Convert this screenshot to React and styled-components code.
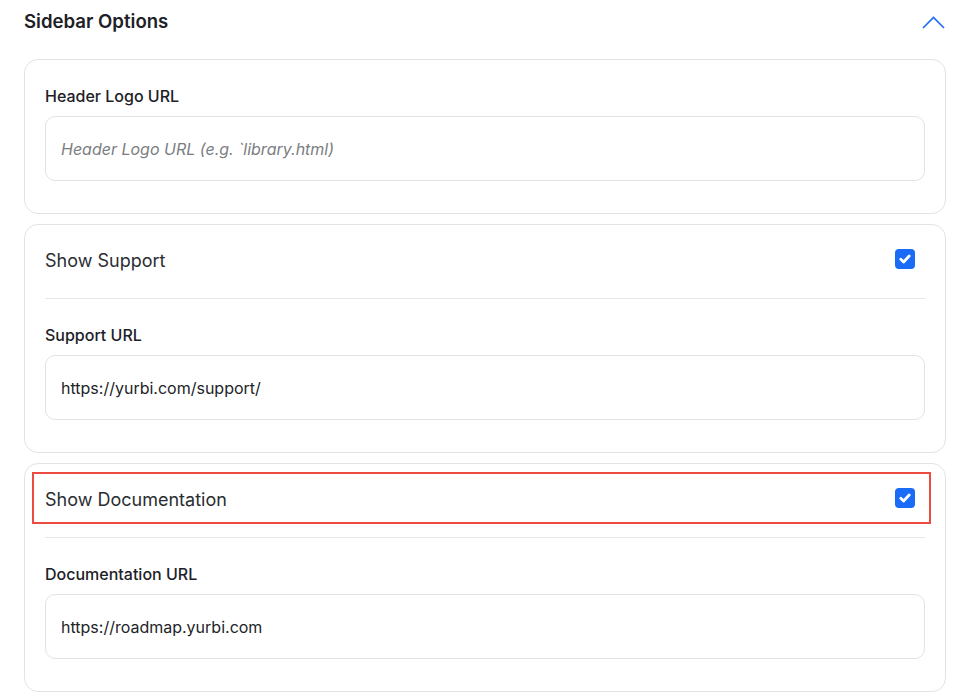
import styled, { createGlobalStyle } from "styled-components";

const GlobalStyle = createGlobalStyle`
    body {
        margin: 0;
        background: #ffffff;
        font-family: Inter, "Noto Sans", sans-serif;
        color: #1f2328;
    }
`;

const Page = styled.div`
    padding: 0 11px 0 24px;
`;

const SectionHeader = styled.div`
    display: flex;
    align-items: center;
    justify-content: space-between;
    height: 42px;
    margin-bottom: 17px;
`;

const SectionTitle = styled.h2`
    margin: 0;
    font-size: 18.6px;
    font-weight: 600;
    color: #1d2127;
`;

const Chevron = styled.svg`
    width: 23px;
    height: 13px;
    margin-right: 1px;
    margin-top: 3px;
`;

const CardList = styled.div`
    display: flex;
    flex-direction: column;
    gap: 10px;
`;

const Card = styled.div`
    border: 1px solid #e3e3e6;
    border-radius: 14px;
    padding: 0 20px;
`;

const ToggleRow = styled.div`
    display: flex;
    align-items: center;
    justify-content: space-between;
    height: 48px;
    margin: 8px -6px 0 -13px;
    padding: 0 14px 0 11px;
    border: 2px solid ${props => (props.$highlight ? "#ee4b40" : "transparent")};
`;

const ToggleLabel = styled.span`
    font-size: 18px;
    font-weight: 400;
    color: #2a2d31;
    margin-top: 2px;
`;

const Checkbox = styled.span`
    display: flex;
    align-items: center;
    justify-content: center;
    width: 20px;
    height: 20px;
    border-radius: 4px;
    background: #1a6cf6;
`;

const Divider = styled.hr`
    margin: 13px 0 0;
    border: 0;
    border-top: 1px solid #e6e6e8;
`;

const Field = styled.div`
    display: flex;
    flex-direction: column;
    gap: 10px;
    padding: 26px 0 32px;
`;

const FieldLabel = styled.label`
    font-size: 16px;
    line-height: 20px;
    font-weight: 500;
    color: #1d2127;
`;

const Input = styled.input`
    box-sizing: border-box;
    height: 65px;
    width: 100%;
    padding: 0 15px;
    border: 1px solid #e3e3e6;
    border-radius: 10px;
    font-family: Inter, "Noto Sans", sans-serif;
    font-size: 16px;
    color: #222428;
    background: #ffffff;
    outline: none;

    &::placeholder {
        font-style: italic;
        color: #7b7d82;
    }
`;

function CheckIcon() {
    return (
        <svg width="12" height="10" viewBox="0 0 12 10">
            <path d="M1.8 5.3 L4.6 8 L10.2 2" fill="none" stroke="#fff" strokeWidth="2.8" strokeLinecap="round" strokeLinejoin="round" />
        </svg>
    );
}

function UrlField({ label, value, placeholder }) {
    return (
        <Field>
            <FieldLabel>{label}</FieldLabel>
            <Input defaultValue={value} placeholder={placeholder} />
        </Field>
    );
}

function ToggleCard({ title, highlight, label, value }) {
    return (
        <Card>
            <ToggleRow $highlight={highlight}>
                <ToggleLabel>{title}</ToggleLabel>
                <Checkbox><CheckIcon /></Checkbox>
            </ToggleRow>
            <Divider />
            <UrlField label={label} value={value} />
        </Card>
    );
}

export default function App() {
    return (
        <Page>
            <GlobalStyle />
            <SectionHeader>
                <SectionTitle>Sidebar Options</SectionTitle>
                <Chevron viewBox="0 0 23 13">
                    <path d="M1 12 L11.5 1.5 L22 12" fill="none" stroke="#1a6cf6" strokeWidth="1.6" />
                </Chevron>
            </SectionHeader>
            <CardList>
                <Card>
                    <UrlField label="Header Logo URL" placeholder="Header Logo URL (e.g. `library.html)" />
                </Card>
                <ToggleCard title="Show Support" label="Support URL" value="https://yurbi.com/support/" />
                <ToggleCard title="Show Documentation" highlight label="Documentation URL" value="https://roadmap.yurbi.com" />
            </CardList>
        </Page>
    );
}
